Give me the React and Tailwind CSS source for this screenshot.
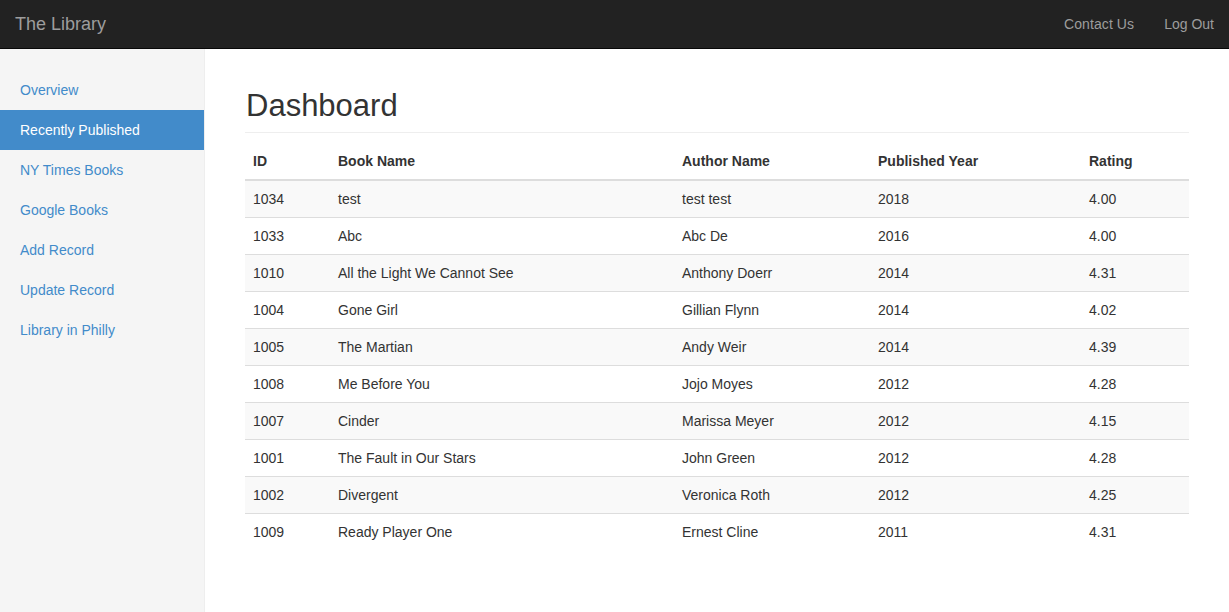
import React from 'react';

const books = [
  { id: 1034, name: 'test', author: 'test test', year: 2018, rating: '4.00' },
  { id: 1033, name: 'Abc', author: 'Abc De', year: 2016, rating: '4.00' },
  { id: 1010, name: 'All the Light We Cannot See', author: 'Anthony Doerr', year: 2014, rating: '4.31' },
  { id: 1004, name: 'Gone Girl', author: 'Gillian Flynn', year: 2014, rating: '4.02' },
  { id: 1005, name: 'The Martian', author: 'Andy Weir', year: 2014, rating: '4.39' },
  { id: 1008, name: 'Me Before You', author: 'Jojo Moyes', year: 2012, rating: '4.28' },
  { id: 1007, name: 'Cinder', author: 'Marissa Meyer', year: 2012, rating: '4.15' },
  { id: 1001, name: 'The Fault in Our Stars', author: 'John Green', year: 2012, rating: '4.28' },
  { id: 1002, name: 'Divergent', author: 'Veronica Roth', year: 2012, rating: '4.25' },
  { id: 1009, name: 'Ready Player One', author: 'Ernest Cline', year: 2011, rating: '4.31' },
];

const menuItems = [
  'Overview',
  'Recently Published',
  'NY Times Books',
  'Google Books',
  'Add Record',
  'Update Record',
  'Library in Philly',
];

const App = () => {
  const active = 'Recently Published';

  return (
    <div className="min-h-[612px] flex flex-col bg-white text-[#333] text-[14px] leading-[20px] font-['Liberation_Sans',Arial,sans-serif]">
      {/* Top navbar */}
      <header className="h-[49px] bg-[#222] border-b border-[#080808] flex items-center justify-between px-[15px]">
        <div className="text-[18px] text-[#9d9d9d]">The Library</div>
        <nav className="flex items-center">
          <a className="px-[15px] text-[#9d9d9d] tracking-[0.1px]">Contact Us</a>
          <a className="pl-[15px] text-[#9d9d9d]">Log Out</a>
        </nav>
      </header>

      <div className="flex flex-1">
        {/* Sidebar */}
        <aside className="w-[205px] shrink-0 bg-[#f5f5f5] border-r border-[#eee] pt-[21px]">
          <ul>
            {menuItems.map((item) => (
              <li key={item}>
                <a
                  className={`block px-[20px] py-[10px] ${
                    item === active ? 'bg-[#428bca] text-white' : 'text-[#428bca]'
                  }`}
                >
                  {item}
                </a>
              </li>
            ))}
          </ul>
        </aside>

        {/* Main */}
        <main className="flex-1 pl-[40px] pr-[40px]">
          <h1 className="mt-[37px] pb-[6px] mb-[10px] border-b border-[#eee] text-[31px] leading-[40px] font-normal pl-[1px]">
            Dashboard
          </h1>

          <table className="w-full border-collapse table-fixed">
            <colgroup>
              <col className="w-[85px]" />
              <col className="w-[344px]" />
              <col className="w-[196px]" />
              <col className="w-[211px]" />
              <col />
            </colgroup>
            <thead>
              <tr className="border-b-2 border-[#ddd]">
                {['ID', 'Book Name', 'Author Name', 'Published Year', 'Rating'].map((h) => (
                  <th key={h} className="p-[8px] text-left font-bold">
                    {h}
                  </th>
                ))}
              </tr>
            </thead>
            <tbody>
              {books.map((b, i) => (
                <tr key={b.id} className={`border-t border-[#ddd] ${i % 2 === 0 ? 'bg-[#f9f9f9]' : ''}`}>
                  <td className="p-[8px]">{b.id}</td>
                  <td className="p-[8px]">{b.name}</td>
                  <td className="p-[8px]">{b.author}</td>
                  <td className="p-[8px]">{b.year}</td>
                  <td className="p-[8px]">{b.rating}</td>
                </tr>
              ))}
            </tbody>
          </table>
        </main>
      </div>
    </div>
  );
};

export default App;
